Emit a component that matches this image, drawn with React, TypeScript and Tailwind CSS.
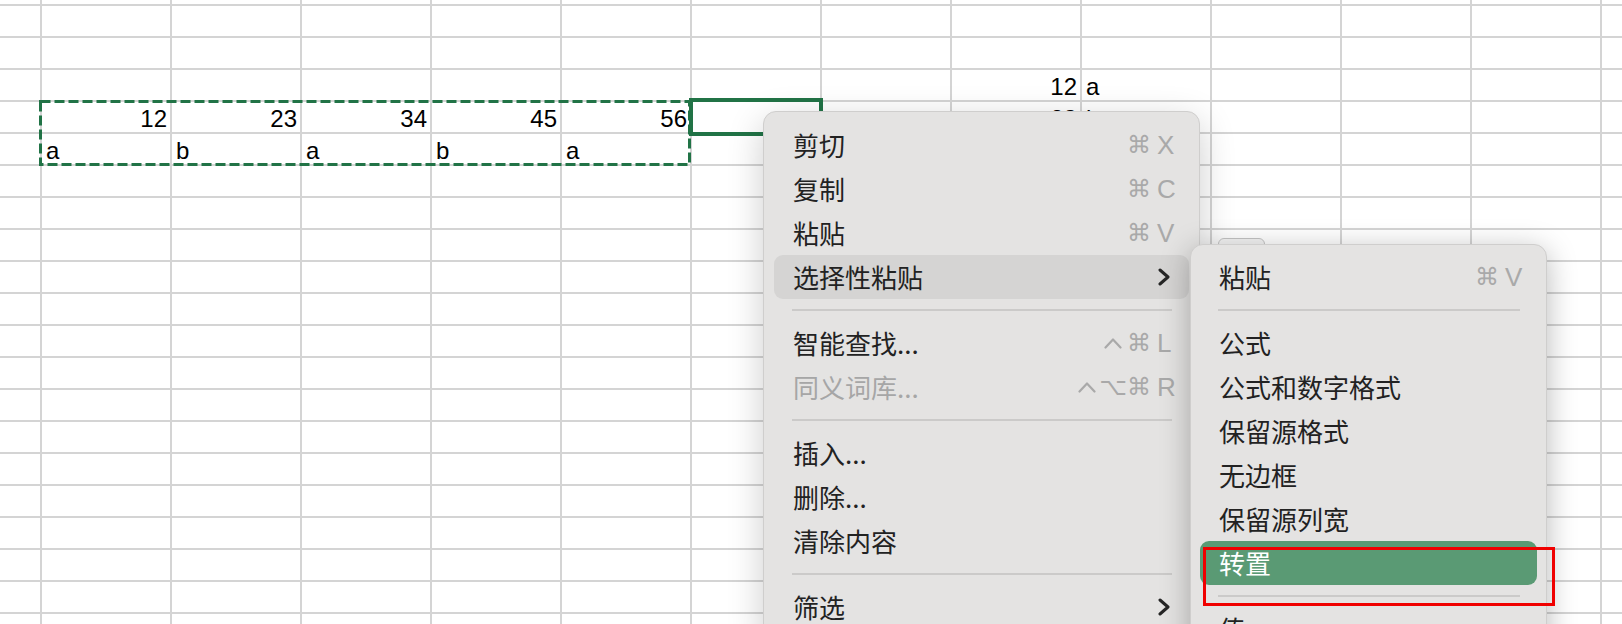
import clsx from 'clsx';

const COLS = 14;
const ROWS = 21;

// sheet contents keyed by "row,col" (row 0 / col 0 are the clipped edge cells)
const CELLS: Record<string, { v: string; num?: boolean }> = {
    '4,1': { v: '12', num: true },
    '4,2': { v: '23', num: true },
    '4,3': { v: '34', num: true },
    '4,4': { v: '45', num: true },
    '4,5': { v: '56', num: true },
    '5,1': { v: 'a' },
    '5,2': { v: 'b' },
    '5,3': { v: 'a' },
    '5,4': { v: 'b' },
    '5,5': { v: 'a' },
    '3,8': { v: '12', num: true },
    '3,9': { v: 'a' },
    '4,8': { v: '23', num: true },
    '4,9': { v: 'b' },
    '5,8': { v: '34', num: true },
    '5,9': { v: 'a' },
    '6,8': { v: '45', num: true },
    '6,9': { v: 'b' },
    '7,8': { v: '56', num: true },
    '7,9': { v: 'a' },
};

type MenuEntry =
    | { label: string; keys?: string[]; sub?: boolean; disabled?: boolean; hl?: 'gray' | 'green' }
    | 'sep';

const MAIN_MENU: MenuEntry[] = [
    { label: '剪切', keys: ['⌘', 'X'] },
    { label: '复制', keys: ['⌘', 'C'] },
    { label: '粘贴', keys: ['⌘', 'V'] },
    { label: '选择性粘贴', sub: true, hl: 'gray' },
    'sep',
    { label: '智能查找...', keys: ['ctrl', '⌘', 'L'] },
    { label: '同义词库...', keys: ['ctrl', '⌥', '⌘', 'R'], disabled: true },
    'sep',
    { label: '插入...' },
    { label: '删除...' },
    { label: '清除内容' },
    'sep',
    { label: '筛选', sub: true },
];

const PASTE_MENU: MenuEntry[] = [
    { label: '粘贴', keys: ['⌘', 'V'] },
    'sep',
    { label: '公式' },
    { label: '公式和数字格式' },
    { label: '保留源格式' },
    { label: '无边框' },
    { label: '保留源列宽' },
    { label: '转置', hl: 'green' },
    'sep',
    { label: '值' },
];

function Chevron() {
    return (
        <svg width="12" height="18" viewBox="0 0 12 18" className="mr-[4px]">
            <polyline
                points="2,2 10,9 2,16"
                fill="none"
                stroke="#262626"
                strokeWidth="3"
                strokeLinecap="round"
                strokeLinejoin="round"
            />
        </svg>
    );
}

// control key caret, drawn since the fallback glyph is too small
function Caret() {
    return (
        <svg width="18" height="12" viewBox="0 0 18 12" className="mx-auto">
            <polyline
                points="1.5,10.5 9,2.5 16.5,10.5"
                fill="none"
                stroke="#a9a9a9"
                strokeWidth="2.2"
                strokeLinecap="round"
                strokeLinejoin="round"
            />
        </svg>
    );
}

function Shortcut({ keys }: { keys: string[] }) {
    const mods = keys.slice(0, -1);
    const key = keys[keys.length - 1];
    return (
        <div className="flex items-center text-[#a9a9a9]">
            {mods.map((m, i) => (
                <span
                    key={i}
                    className="w-[26px] flex justify-center text-[24px] leading-none font-['DejaVu_Sans',sans-serif]"
                >
                    {m === 'ctrl' ? <Caret /> : m}
                </span>
            ))}
            <span className="ml-[5px] w-[17px] text-[26px] leading-none font-['Liberation_Sans',sans-serif]">{key}</span>
        </div>
    );
}

function Menu({ entries, mx, sepL, sepR }: { entries: MenuEntry[]; mx: string; sepL: string; sepR: string }) {
    return (
        <>
            {entries.map((e, i) =>
                e === 'sep' ? (
                    <div key={i} className={clsx('h-[22px] flex items-center', sepL, sepR)}>
                        <div className="h-[2px] w-full bg-[#cbcac9]" />
                    </div>
                ) : (
                    <div
                        key={i}
                        className={clsx(
                            'h-[44px] rounded-[9px] flex items-center pl-[19px] pr-[15px]',
                            mx,
                            e.hl === 'gray' && 'bg-[#d5d4d3]',
                            e.hl === 'green' && 'bg-[#5a9a74]',
                        )}
                    >
                        <span
                            className={clsx(
                                'flex-1 text-[26px] leading-none',
                                e.disabled ? 'text-[#a6a6a6]' : e.hl === 'green' ? 'text-white' : 'text-[#222222]',
                            )}
                        >
                            {e.label}
                        </span>
                        {e.keys && <Shortcut keys={e.keys} />}
                        {e.sub && <Chevron />}
                    </div>
                ),
            )}
        </>
    );
}

export default function App() {
    const cells = [];
    for (let r = 0; r < ROWS; r++) {
        for (let c = 0; c < COLS; c++) {
            const cell = CELLS[`${r},${c}`];
            cells.push(
                <div
                    key={`${r}-${c}`}
                    className={clsx(
                        'bg-white flex items-end pb-[1px] overflow-visible whitespace-nowrap',
                        cell?.num ? 'justify-end pr-[3px]' : 'justify-start pl-[4px]',
                    )}
                >
                    {cell && <span className="text-[24px] leading-none text-black">{cell.v}</span>}
                </div>,
            );
        }
    }

    return (
        <div className="relative w-[1622px] h-[624px] overflow-hidden bg-white font-['Liberation_Sans',Arial,sans-serif]">
            {/* sheet grid */}
            <div className="grid grid-cols-[40px_repeat(13,128px)] grid-rows-[4px_repeat(20,30px)] gap-[2px] bg-[#d4d4d4] w-max">
                {cells}
            </div>

            {/* copy marquee */}
            <svg className="absolute left-0 top-0 pointer-events-none" width="1622" height="624">
                <rect
                    x="40.5"
                    y="101.5"
                    width="649"
                    height="63"
                    fill="none"
                    stroke="#217346"
                    strokeWidth="3"
                    strokeDasharray="10 4"
                />
            </svg>

            {/* active cell */}
            <div className="absolute left-[689px] top-[98px] w-[134px] h-[38px] border-4 border-[#217346]" />

            {/* context menu */}
            <div className="absolute left-[763px] top-[111px] w-[437px] pt-[11px] pb-[11px] rounded-[13px] bg-[#e4e3e2] border border-[#cfcecd] shadow-[0_10px_36px_rgba(0,0,0,0.2)] font-['Noto_Sans_CJK_SC','Liberation_Sans',sans-serif]">
                <Menu entries={MAIN_MENU} mx="mx-[10px]" sepL="ml-[28px]" sepR="mr-[27px]" />
            </div>

            {/* paste options button peeking behind the submenu */}
            <div className="absolute left-[1218px] top-[238px] w-[47px] h-[30px] rounded-[6px] bg-[#f4f4f4] border border-[#c4c4c4]" />

            {/* paste special submenu */}
            <div className="absolute left-[1190px] top-[244px] w-[357px] pt-[10px] pb-[10px] rounded-[13px] bg-[#e4e3e2] border border-[#cfcecd] shadow-[0_6px_30px_rgba(0,0,0,0.28)] font-['Noto_Sans_CJK_SC','Liberation_Sans',sans-serif]">
                <Menu entries={PASTE_MENU} mx="mx-[9px]" sepL="ml-[27px]" sepR="mr-[26px]" />
            </div>

            {/* annotation box */}
            <div className="absolute left-[1203px] top-[547px] w-[352px] h-[59px] border-[3px] border-[#f00000]" />
        </div>
    );
}
